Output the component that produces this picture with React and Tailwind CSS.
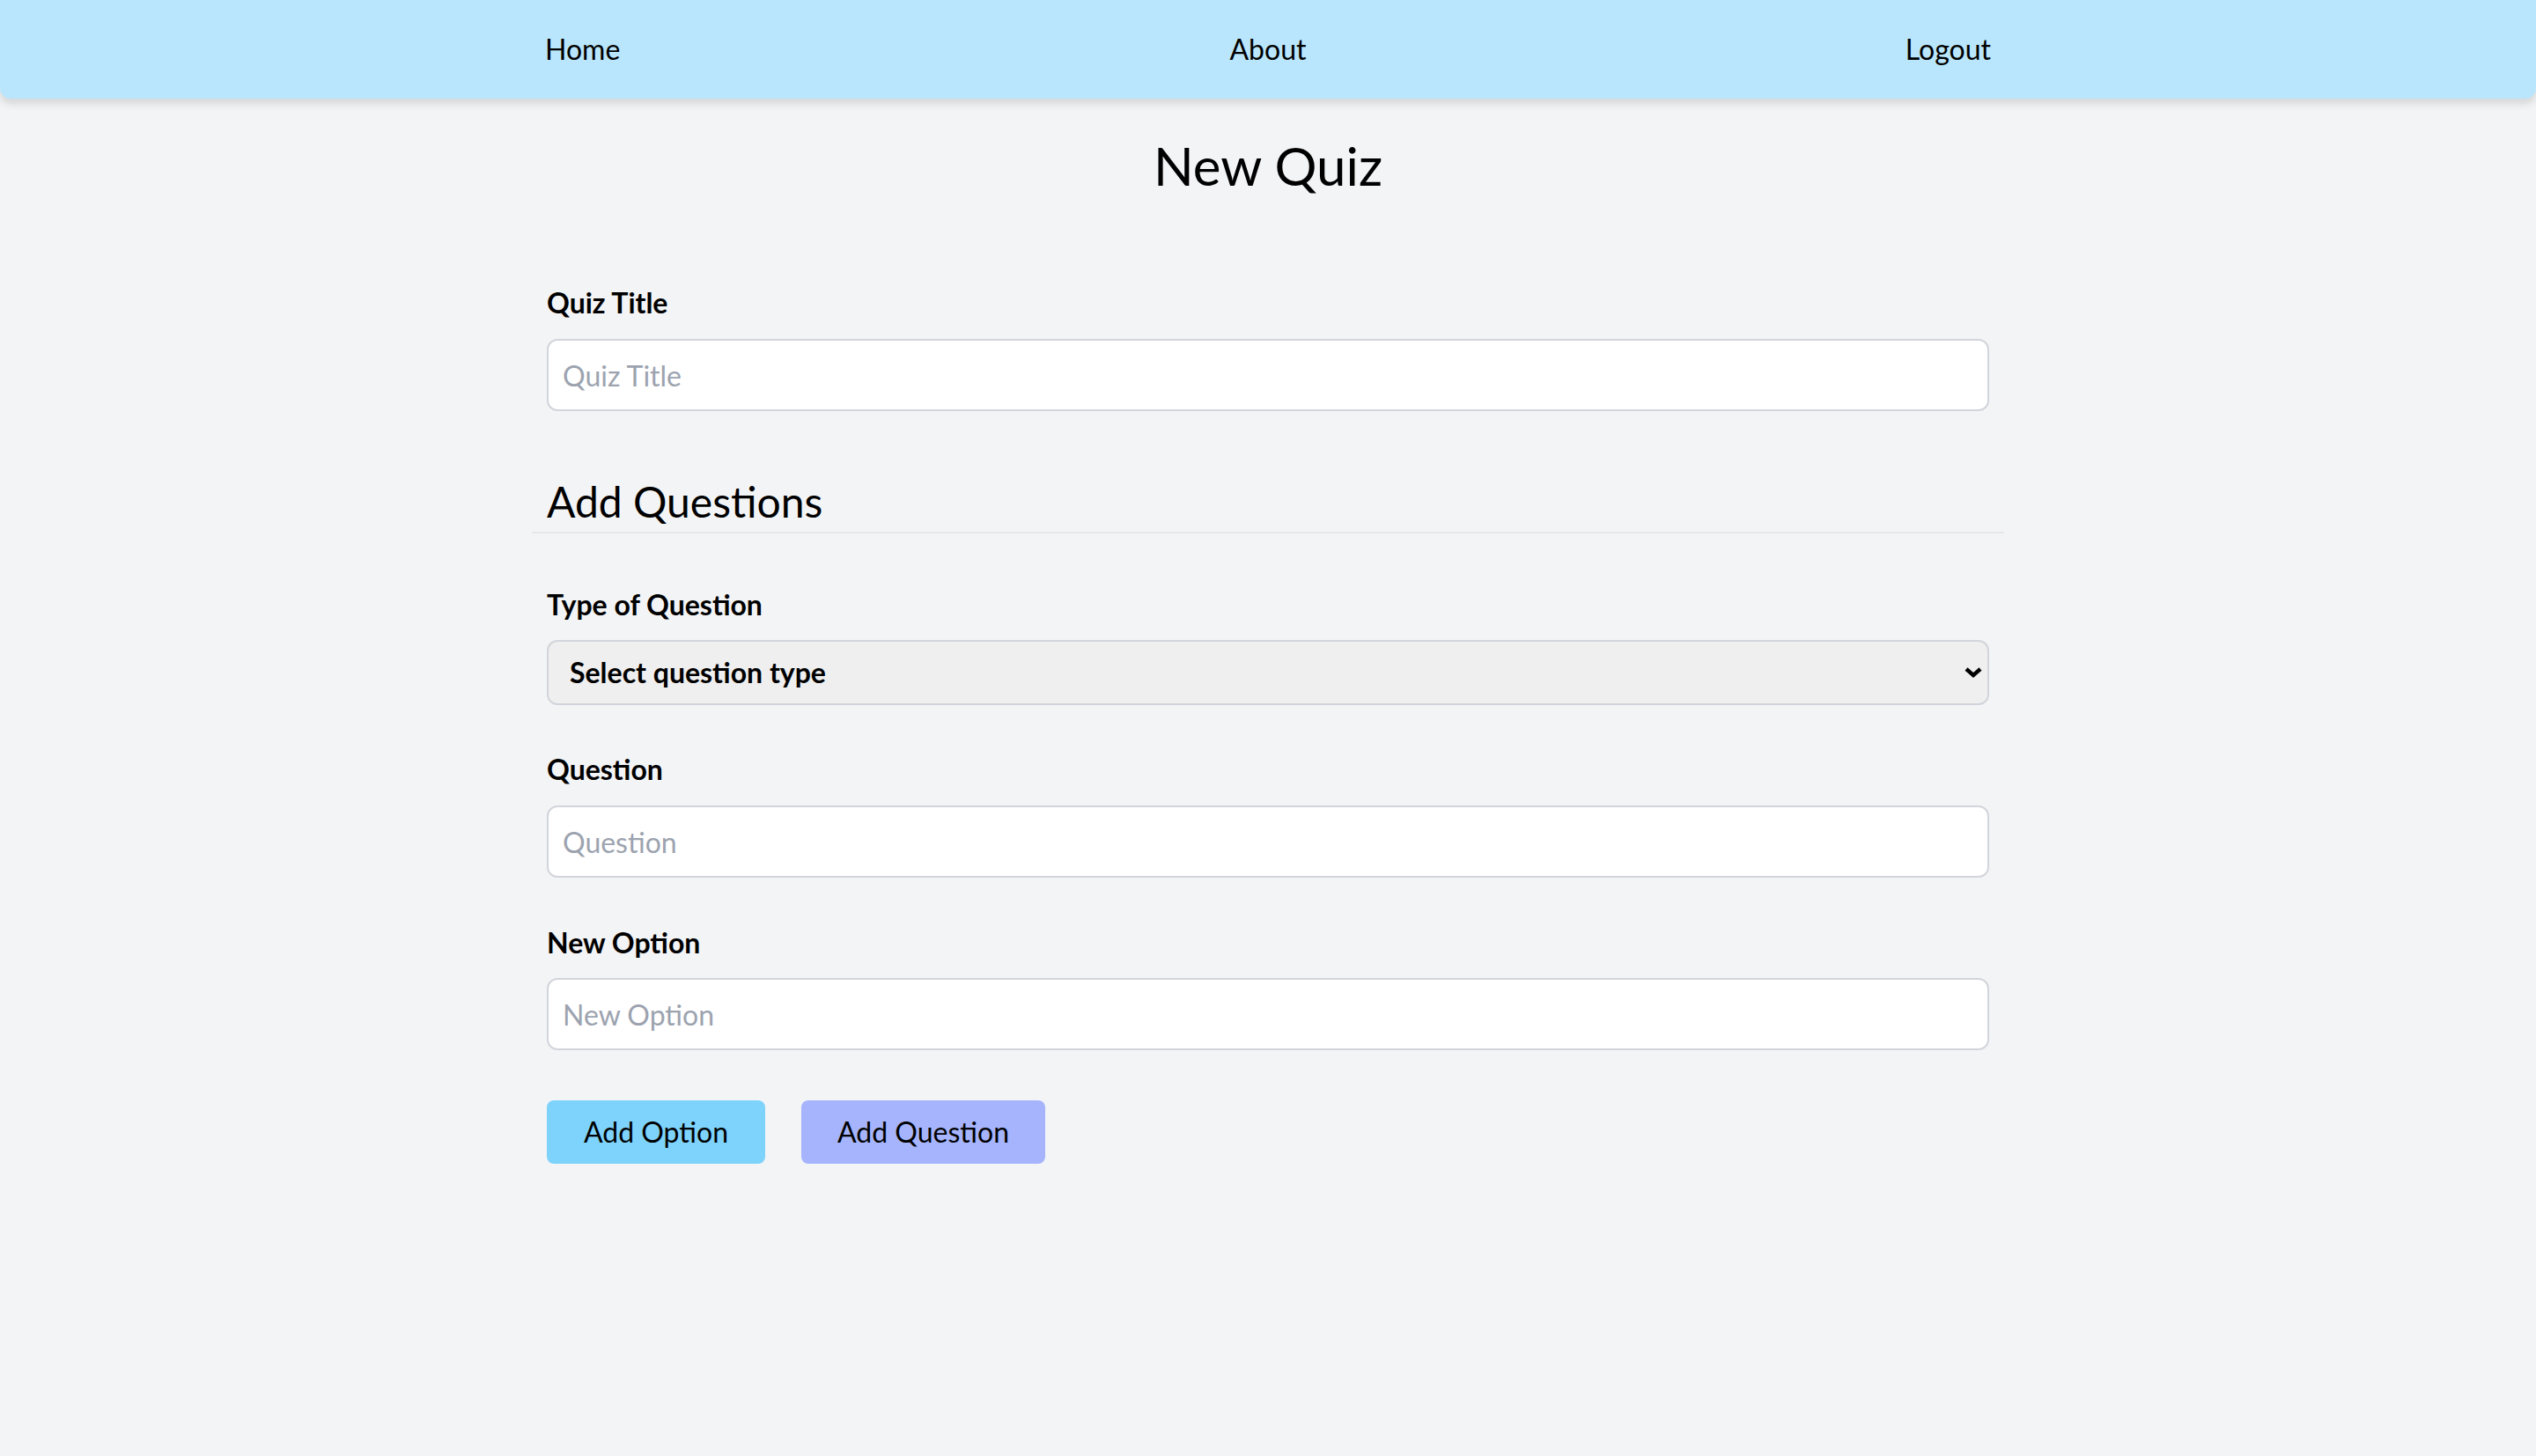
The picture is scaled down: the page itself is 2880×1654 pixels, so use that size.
import React from "react";

const font = { fontFamily: "Lato, 'Open Sans', 'Noto Sans', sans-serif" };

function Label({ children, className = "" }) {
  return (
    <label className={`block text-[32px] leading-[48px] font-bold text-black ${className}`}>
      {children}
    </label>
  );
}

function TextInput({ placeholder }) {
  return (
    <input
      type="text"
      placeholder={placeholder}
      className="block w-full h-[82px] rounded-[12px] border-2 border-[#d1d5db] bg-white px-[16px] text-[32px] text-black placeholder:text-[#9ca3af] outline-none"
    />
  );
}

export default function App() {
  return (
    <div className="min-h-[1654px] bg-[#f3f4f6] text-black" style={font}>
      <nav className="h-[112px] bg-[#b9e6fc] rounded-b-[12px] shadow-[0_6px_10px_rgba(0,0,0,0.12)]">
        <div className="mx-auto w-[1642px] h-full grid grid-cols-3 items-center text-[32px]">
          <a className="justify-self-start cursor-pointer">Home</a>
          <a className="justify-self-center cursor-pointer">About</a>
          <a className="justify-self-end cursor-pointer">Logout</a>
        </div>
      </nav>

      <main className="mx-auto w-[1672px] px-[17px] pt-[40px]">
        <h1 className="text-center text-[60px] leading-[72px] font-normal">New Quiz</h1>

        <form className="mt-[96px]" onSubmit={(e) => e.preventDefault()}>
          <Label className="mb-[17px]">Quiz Title</Label>
          <TextInput placeholder="Quiz Title" />

          <h2 className="mt-[71px] -mx-[17px] px-[17px] pb-[2px] text-[48px] leading-[64px] font-normal border-b-2 border-[#e5e7eb]">
            Add Questions
          </h2>

          <Label className="mt-[57px] mb-[16px]">Type of Question</Label>
          <div className="relative">
            <select
              defaultValue=""
              className="block w-full h-[74px] appearance-none rounded-[12px] border-2 border-[#d1d5db] bg-[#efefef] pl-[24px] pr-[60px] text-[32px] font-bold text-black outline-none"
            >
              <option value="">Select question type</option>
              <option value="mcq">Multiple Choice</option>
              <option value="tf">True / False</option>
            </select>
            <svg
              className="pointer-events-none absolute right-[7px] top-1/2 -translate-y-1/2"
              width="22"
              height="14"
              viewBox="0 0 22 14"
            >
              <polyline points="3,3 11,10 19,3" fill="none" stroke="black" strokeWidth="4.5" />
            </svg>
          </div>

          <Label className="mt-[49px] mb-[17px]">Question</Label>
          <TextInput placeholder="Question" />

          <Label className="mt-[50px] mb-[16px]">New Option</Label>
          <TextInput placeholder="New Option" />

          <div className="mt-[57px] flex gap-[41px]">
            <button type="button" className="h-[72px] w-[248px] rounded-[8px] bg-[#7dd3fc] text-[32px] text-black">
              Add Option
            </button>
            <button type="button" className="h-[72px] w-[277px] rounded-[8px] bg-[#a5b4fc] text-[32px] text-black">
              Add Question
            </button>
          </div>
        </form>
      </main>
    </div>
  );
}
